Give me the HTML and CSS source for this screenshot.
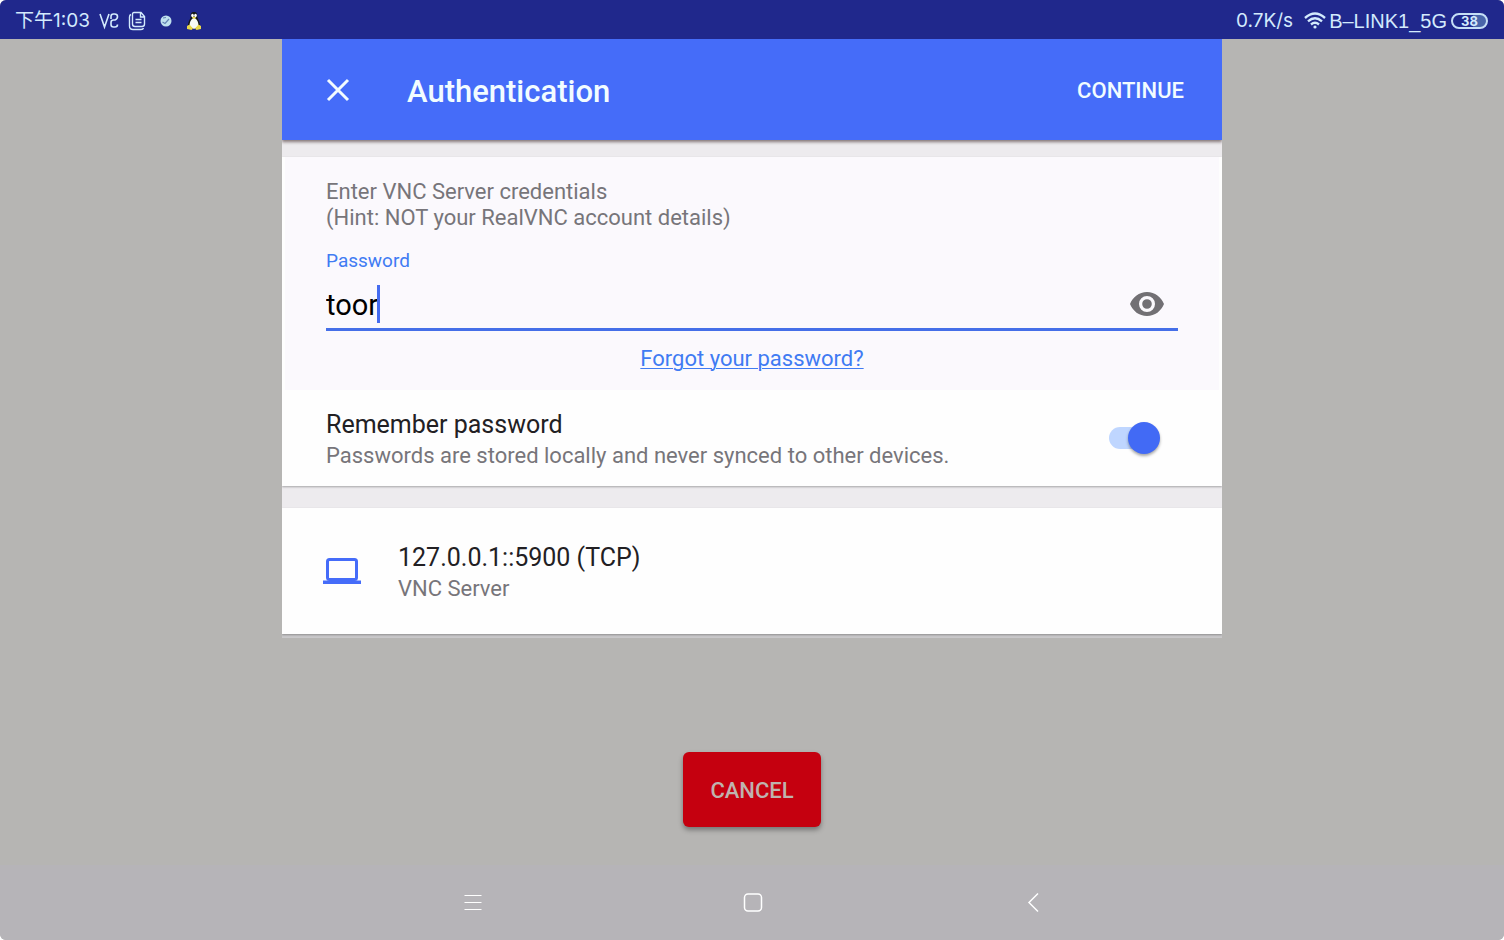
FILE: index.html
```html
<!DOCTYPE html>
<html lang="en">
<head>
<meta charset="utf-8">
<title>Authentication</title>
<meta name="viewport" content="width=device-width, initial-scale=1">
<link rel="stylesheet" href="styles.css">
</head>
<body>
<div class="screen">
  <header class="status">
    <div class="status-group">
      <span class="clock" lang="zh">下午1:03</span>
      <svg class="icon-vnc" width="20" height="18" viewBox="0 0 20 18" fill="none" stroke="currentColor" stroke-width="1.6"><path d="M1 2l4.500 13L10 2M12 7V4.500Q12 2 14.500 2h1Q18.500 2 18.500 4.500T16 8H14.500Q12 8 12 10.500v2Q12 15 14.500 15H16Q18.500 15 18.500 12.500"/></svg>
      <svg class="icon-copy" width="18" height="20" viewBox="0 0 18 20" fill="none" stroke="currentColor" stroke-width="1.400"><path d="M6 1.500h7l3.500 4V13q0 2.500-2.500 2.500H7Q4.500 15.500 4.500 13V3Q4.500 1.500 6 1.500zM3 3.500Q1.500 4 1.500 6v9q0 3.500 3.500 3.500h8q2 0 2.500-1.500M7.500 8.500h6M7.500 11.500h6M12.500 2v4H16"/></svg>
      <svg class="icon-ball" width="12" height="12" viewBox="0 0 12 12"><circle cx="6" cy="6" r="5.500" fill="#bfe0ee"/><path d="M2.500 7l2.500 1.500L9 4M3 3l3-.5" fill="none" stroke="#6482b4" stroke-width="1.200"/></svg>
      <svg class="icon-tux" width="16" height="20" viewBox="0 0 16 20"><path d="M8 1c-3 0-3.500 2-3.300 5C4.500 8 2 10 2 15l4 3h4l4-3c0-5-2.500-7-2.700-9C11.500 3 11 1 8 1z" fill="#17191b"/><path d="M8 6.500c-3 1.500-4.800 5-4.300 9L8 18l4.300-2.500C12.800 11.500 11 8 8 6.500z" fill="#f8faf4"/><ellipse cx="6.500" cy="4.500" rx="1.300" ry="1.700" fill="#fff"/><ellipse cx="9.500" cy="4.500" rx="1.300" ry="1.700" fill="#fff"/><path d="M5.800 6.500L8 5.500l2.200 1L8 8zM1 15l2.500-1.500L7 17.500 5.500 19 1 18zM15 15l-2.500-1.500L9 17.500l1.500 1.500 4.500-1z" fill="#ead84a"/></svg>
    </div>
    <div class="status-group">
      <span class="speed">0.7K/s</span>
      <svg class="icon-wifi" width="22" height="17" viewBox="0 0 22 17" fill="none" stroke="currentColor" stroke-width="2.400"><path d="M1 6Q11-3 21 6M4 9.300q7-6 14 0M7 12.500q4-3.400 8 0"/><circle cx="11" cy="15" r="1.600" fill="currentColor" stroke="none"/></svg>
      <span class="network">B–LINK1_5G</span>
      <span class="battery">38</span>
    </div>
  </header>

  <main class="content">
    <form class="dialog">
      <div class="appbar">
        <button type="button" class="close" aria-label="Close"><svg width="24" height="24" viewBox="0 0 24 24" fill="none" stroke="currentColor" stroke-width="3"><path d="M2 2l20 20M22 2L2 22"/></svg></button>
        <h1 class="title">Authentication</h1>
        <button type="button" class="continue">CONTINUE</button>
      </div>

      <section class="card">
        <div class="credentials">
          <p class="note">Enter VNC Server credentials<br>(Hint: NOT your RealVNC account details)</p>
          <label class="field-label" for="password">Password</label>
          <div class="field">
            <span class="entry"><input id="password" class="input" type="text" value="toor" size="4"><span class="caret"></span></span>
            <button type="button" class="reveal" aria-label="Show password"><svg width="34" height="24" viewBox="0 0 34 24"><path fill="currentColor" fill-rule="evenodd" d="M17 0C9 0 2.800 5 0 12c2.800 7 9 12 17 12s14.200-5 17-12C31.200 5 25 0 17 0zm0 20a8 8 0 1 1 0-16 8 8 0 0 1 0 16zm0-12.800a4.800 4.800 0 1 0 0 9.600 4.800 4.800 0 0 0 0-9.600z"/></svg></button>
          </div>
          <a class="forgot" href="#">Forgot your password?</a>
        </div>
        <div class="remember">
          <div class="remember-text">
            <label class="primary" for="remember">Remember password</label>
            <p class="secondary">Passwords are stored locally and never synced to other devices.</p>
          </div>
          <input class="switch" id="remember" type="checkbox" role="switch" checked>
        </div>
      </section>

      <section class="card server">
        <svg class="laptop" width="38" height="26" viewBox="0 0 38 26"><rect x="4.500" y="1.500" width="29" height="20" rx="2" fill="none" stroke="currentColor" stroke-width="3"/><path fill="currentColor" d="M0 22.500h38V26H0z"/></svg>
        <div class="server-text">
          <p class="primary">127.0.0.1::5900 (TCP)</p>
          <p class="secondary">VNC Server</p>
        </div>
      </section>
    </form>
    <button type="button" class="cancel">CANCEL</button>
  </main>

  <nav class="navbar">
    <button type="button" class="nav-button" aria-label="Menu"><svg width="20" height="20" viewBox="0 0 20 20" fill="none" stroke="currentColor" stroke-width="1.200"><path d="M1.500 2.500h17M1.500 9.500h17M1.500 16.500h17"/></svg></button>
    <button type="button" class="nav-button" aria-label="Home"><svg width="20" height="20" viewBox="0 0 20 20" fill="none" stroke="currentColor" stroke-width="1.500"><rect x="1.500" y="1" width="17" height="17" rx="3.500"/></svg></button>
    <button type="button" class="nav-button" aria-label="Back"><svg width="20" height="20" viewBox="0 0 20 20" fill="none" stroke="currentColor" stroke-width="1.500"><path d="M15 .5L6 9.500l9 9"/></svg></button>
  </nav>
</div>
</body>
</html>
```
FILE: styles.css
```css
* { box-sizing: border-box; }
body {
  margin: 0;
  background: #fff;
  font-family: Roboto, "Noto Sans CJK SC", sans-serif;
  color: #212121;
}
h1, p { margin: 0; }
button {
  border: 0;
  padding: 0;
  background: none;
  color: inherit;
  font: inherit;
  cursor: pointer;
}
svg { display: block; flex: none; }

.screen {
  min-height: 100vh;
  display: flex;
  flex-direction: column;
  background: #b6b5b3;
  border-radius: 6px;
  overflow: hidden;
}

.status {
  display: flex;
  justify-content: space-between;
  align-items: center;
  height: 39px;
  padding: 2px 16px 0 15px;
  background: #20288c;
  color: #d3eafd;
  font-family: Inter, "Noto Sans CJK SC", sans-serif;
  font-size: 19px;
  line-height: 24px;
}
.status-group { display: flex; align-items: center; }
.network {
  font-family: "Liberation Sans", sans-serif;
  font-size: 20px;
}
.icon-vnc { margin-left: 9px; }
.icon-copy { margin-left: 9px; }
.icon-ball { margin-left: 14px; }
.icon-tux { margin-left: 14px; }
.icon-wifi { margin: 0 3px 0 11px; }
.battery {
  width: 37px;
  height: 16px;
  margin-left: 4px;
  border: 2px solid #c5def6;
  border-radius: 8px;
  background: linear-gradient(90deg, #20288c 62%, #4965aa 62%);
  font-size: 13px;
  font-weight: 700;
  line-height: 12px;
  text-align: center;
}

.content {
  flex: 1;
  display: flex;
  flex-direction: column;
  align-items: center;
}
.dialog {
  width: 62.5%;
  background: #edebee;
  border-bottom: 4px solid #c9c8ca;
}
.appbar {
  display: flex;
  align-items: center;
  height: 101px;
  padding: 0 38px 0 44px;
  background: #456cf9;
  color: #f2fcff;
  box-shadow: 0 2px 3px rgba(60, 40, 40, 0.6);
  clip-path: inset(0 0 -8px 0);
}
.title {
  flex: 1;
  margin-left: 57px;
  padding-top: 4px;
  font-size: 31px;
  font-weight: 500;
  line-height: 40px;
}
.continue {
  padding-top: 2px;
  font-size: 22px;
  font-weight: 500;
}

.card {
  margin-top: 17px;
  background: #fefefe;
  box-shadow: 0 1px 2px rgba(0, 0, 0, 0.3);
  clip-path: inset(-1px 0 -4px 0);
}
.credentials {
  display: flex;
  flex-direction: column;
  height: 233px;
  margin: 0 3px;
  padding: 22px 41px 0;
  background: #fbf9fd;
}
.note, .secondary {
  font-size: 22px;
  line-height: 26px;
  color: #77757a;
}
.field-label {
  margin-top: 18px;
  font-size: 19px;
  line-height: 24px;
  color: #407bf3;
}
.field {
  display: flex;
  justify-content: space-between;
  align-items: center;
  height: 58px;
  padding: 6px 14px 0 0;
  border-bottom: 3px solid #456fe8;
}
.entry { display: flex; align-items: center; }
.input {
  width: 51px;
  border: 0;
  padding: 2px 0 0;
  outline: 0;
  background: none;
  color: #000;
  font-family: Roboto, sans-serif;
  font-size: 29px;
  line-height: 36px;
}
.caret { width: 3px; height: 38px; background: #456cf0; }
.reveal { color: #727074; }
.forgot {
  align-self: center;
  margin-top: 15px;
  font-size: 22px;
  line-height: 26px;
  color: #407bf3;
  text-underline-offset: 2px;
  text-decoration-thickness: 1px;
}
.remember {
  display: flex;
  justify-content: space-between;
  align-items: center;
  height: 96px;
  padding: 0 62px 0 44px;
}
.remember-text { padding-top: 4px; }
.primary {
  display: block;
  font-size: 25px;
  line-height: 32px;
  color: #222023;
}
.secondary { line-height: 30px; }
.switch {
  appearance: none;
  flex: none;
  display: flex;
  align-items: center;
  justify-content: flex-end;
  width: 51px;
  height: 22px;
  margin: 0;
  border-radius: 11px;
  background: linear-gradient(90deg, #bfd6ff 40px, transparent 40px);
}
.switch::before {
  content: "";
  flex: none;
  width: 32px;
  height: 32px;
  border-radius: 50%;
  background: #426af5;
  box-shadow: 0 2px 3px rgba(0, 0, 0, 0.35);
}
.server {
  display: flex;
  align-items: center;
  gap: 37px;
  height: 126px;
  margin-top: 22px;
  padding: 0 44px 0 41px;
}
.server-text { padding-top: 4px; }
.laptop { color: #456cf9; }

.cancel {
  width: 138px;
  height: 75px;
  margin-top: 114px;
  padding-top: 2px;
  border-radius: 6px;
  background: #c5000f;
  box-shadow: 0 3px 5px rgba(0, 0, 0, 0.35);
  color: #bfb3ae;
  font-size: 22px;
  font-weight: 500;
}

.navbar {
  display: flex;
  justify-content: center;
  align-items: center;
  gap: 260px;
  height: 75px;
  padding-left: 2px;
  background: #b6b4b8;
  color: #fff;
}
```
